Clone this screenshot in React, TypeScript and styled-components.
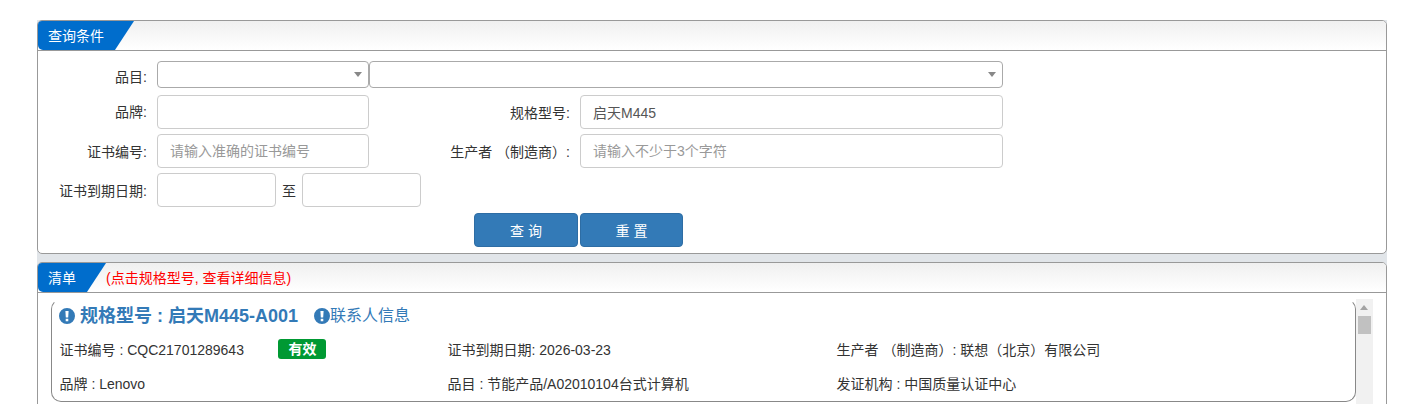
import React from "react";
import styled, { createGlobalStyle } from "styled-components";

const Global = createGlobalStyle`
  html, body { margin: 0; padding: 0; height: 404px; overflow: hidden; background: #fff; }
  body { font-family: "Liberation Sans", "Noto Sans CJK SC", sans-serif; font-size: 14px; color: #333; }
  * { box-sizing: border-box; }
`;

const Page = styled.div`
  width: 1350px;
  margin: 20px 0 0 37px;
  background: #e1e5e9;
  height: 384px;
  overflow: hidden;
`;

const Panel = styled.section<{ $mt?: number }>`
  background: #fff;
  border: 1px solid #999;
  border-radius: 5px;
  margin-top: ${(p) => p.$mt ?? 0}px;
`;

const PanelHead = styled.header`
  display: flex;
  align-items: center;
  height: 30px;
  border-bottom: 1px solid #999;
  background: linear-gradient(#f0f0f0, #fff);
  border-radius: 4px 4px 0 0;
  overflow: hidden;
`;

const Tab = styled.div<{ $w: number }>`
  width: ${(p) => p.$w}px;
  height: 29px;
  padding-left: 10px;
  line-height: 31px;
  color: #fff;
  background: #006dcc;
  border-radius: 0 0 0 5px;
  clip-path: polygon(0 0, 100% 0, calc(100% - 19px) 100%, 0 100%);
  flex: none;
`;

const Hint = styled.span`
  color: #f00;
  margin-bottom: 2px;
`;

const FormBody = styled.div`
  padding: 10px 0 6px;
  display: flex;
  flex-direction: column;
`;

const Row = styled.div<{ $mt?: number }>`
  display: flex;
  align-items: center;
  margin-top: ${(p) => p.$mt ?? 0}px;
`;

const Label = styled.label<{ $w: number; $nudge?: number }>`
  width: ${(p) => p.$w}px;
  margin-right: 10px;
  padding-top: ${(p) => Math.max(p.$nudge ?? 0, 0) * 2}px;
  padding-bottom: ${(p) => Math.max(-(p.$nudge ?? 0), 0) * 2}px;
  text-align: right;
  flex: none;
  white-space: pre;
`;

const Input = styled.input<{ $w: number }>`
  width: ${(p) => p.$w}px;
  height: 34px;
  padding: 0 12px;
  border: 1px solid #ccc;
  border-radius: 4px;
  font: inherit;
  color: #555;
  background: #fff;
  outline: none;
  flex: none;
  &::placeholder { color: #999; opacity: 1; }
`;

const Select = styled.div<{ $w: number }>`
  position: relative;
  width: ${(p) => p.$w}px;
  height: 27px;
  border: 1px solid #aaa;
  border-radius: 4px;
  background: #fff;
  flex: none;
  &::after {
    content: "";
    position: absolute;
    right: 6px;
    top: 10px;
    border-style: solid;
    border-width: 5px 4px 0;
    border-color: #888 transparent transparent;
  }
`;

const To = styled.span`
  width: 26px;
  text-align: center;
  flex: none;
`;

const Buttons = styled(Row)`
  padding-left: 436px;
  gap: 2px;
`;

const Button = styled.button<{ $w: number }>`
  width: ${(p) => p.$w}px;
  height: 34px;
  border: 1px solid #2e6da4;
  border-radius: 4px;
  background: #337ab7;
  color: #fff;
  font: inherit;
  letter-spacing: 4px;
  padding: 0 0 0 4px;
`;

const ListBody = styled.div`
  display: flex;
  padding: 6px 0 0 13px;
  height: 120px;
`;

const CardList = styled.div`
  display: flex;
  flex-direction: column;
  gap: 1px;
  width: 1305px;
  flex: none;
`;

const Card = styled.article`
  height: 103px;
  border: 1px solid #888;
  border-top-color: #fff;
  border-radius: 10px;
  padding: 4px 7px 0;
  flex: none;
`;

const Title = styled.div`
  display: flex;
  align-items: center;
  height: 24px;
  color: #337ab7;
`;

const Heading = styled.h3`
  margin: 0 0 0 5px;
  font-size: 18px;
  font-weight: bold;
  line-height: 24px;
  width: 234px;
`;

const Contact = styled.a`
  font-size: 16px;
  line-height: 24px;
`;

const Icon = styled.svg`
  width: 16px;
  height: 16px;
  fill: #337ab7;
  flex: none;
`;

const Fields = styled.div`
  display: grid;
  grid-template-columns: 388px 389px 1fr;
  grid-auto-rows: 34px;
  margin: 4px 0 0 0.5px;
  align-items: center;
`;

const Field = styled.div`
  display: flex;
  align-items: center;
  white-space: pre;
`;

const Badge = styled.span`
  margin-left: 34.5px;
  width: 48px;
  height: 20px;
  line-height: 20px;
  text-align: center;
  border-radius: 3px;
  background: #009933;
  color: #fff;
  font-weight: bold;
`;

const Scrollbar = styled.div`
  position: relative;
  width: 17px;
  background: #f1f1f1;
  flex: none;
  &::before {
    content: "";
    position: absolute;
    left: 4px;
    top: 6px;
    border-style: solid;
    border-width: 0 4px 5px;
    border-color: transparent transparent #a3a3a3;
  }
`;

const Thumb = styled.div`
  margin: 17px 2px 0;
  height: 18px;
  background: #c1c1c1;
`;

const Alert = () => (
  <Icon viewBox="0 0 16 16" aria-hidden="true">
    <path
      fillRule="evenodd"
      d="M8 0a8 8 0 1 1 0 16A8 8 0 0 1 8 0zM6.400 3l.4 6.600h1.200h1.200L9.600 3zM6.700 10.800v2.500h2.600v-2.500z"
    />
  </Icon>
);

export default function App() {
  return (
    <>
      <Global />
      <Page>
        <Panel>
          <PanelHead>
            <Tab $w={96}>查询条件</Tab>
          </PanelHead>
          <FormBody>
            <Row>
              <Label $w={109} $nudge={1}>品目:</Label>
              <Select $w={212} />
              <Select $w={634} />
            </Row>
            <Row $mt={7}>
              <Label $w={109} $nudge={-1}>品牌:</Label>
              <Input $w={212} />
              <Label $w={201}>规格型号:</Label>
              <Input $w={423} defaultValue="启天M445" />
            </Row>
            <Row $mt={5}>
              <Label $w={109}>证书编号:</Label>
              <Input $w={212} placeholder="请输入准确的证书编号" />
              <Label $w={201}>生产者 （制造商）:</Label>
              <Input $w={423} placeholder="请输入不少于3个字符" />
            </Row>
            <Row $mt={5}>
              <Label $w={109}>证书到期日期:</Label>
              <Input $w={119} />
              <To>至</To>
              <Input $w={119} />
            </Row>
            <Buttons $mt={6}>
              <Button $w={104}>查询</Button>
              <Button $w={103}>重置</Button>
            </Buttons>
          </FormBody>
        </Panel>
        <Panel $mt={8}>
          <PanelHead>
            <Tab $w={68}>清单</Tab>
            <Hint>(点击规格型号, 查看详细信息)</Hint>
          </PanelHead>
          <ListBody>
            <CardList>
              <Card>
                <Title>
                  <Alert />
                  <Heading>规格型号 : 启天M445-A001</Heading>
                  <Alert />
                  <Contact>联系人信息</Contact>
                </Title>
                <Fields>
                  <Field>
                    证书编号 : CQC21701289643<Badge>有效</Badge>
                  </Field>
                  <Field>证书到期日期: 2026-03-23</Field>
                  <Field>生产者 （制造商）: 联想（北京）有限公司</Field>
                  <Field>品牌 : Lenovo</Field>
                  <Field>品目 : 节能产品/A02010104台式计算机</Field>
                  <Field>发证机构 : 中国质量认证中心</Field>
                </Fields>
              </Card>
              <Card />
            </CardList>
            <Scrollbar>
              <Thumb />
            </Scrollbar>
          </ListBody>
        </Panel>
      </Page>
    </>
  );
}
